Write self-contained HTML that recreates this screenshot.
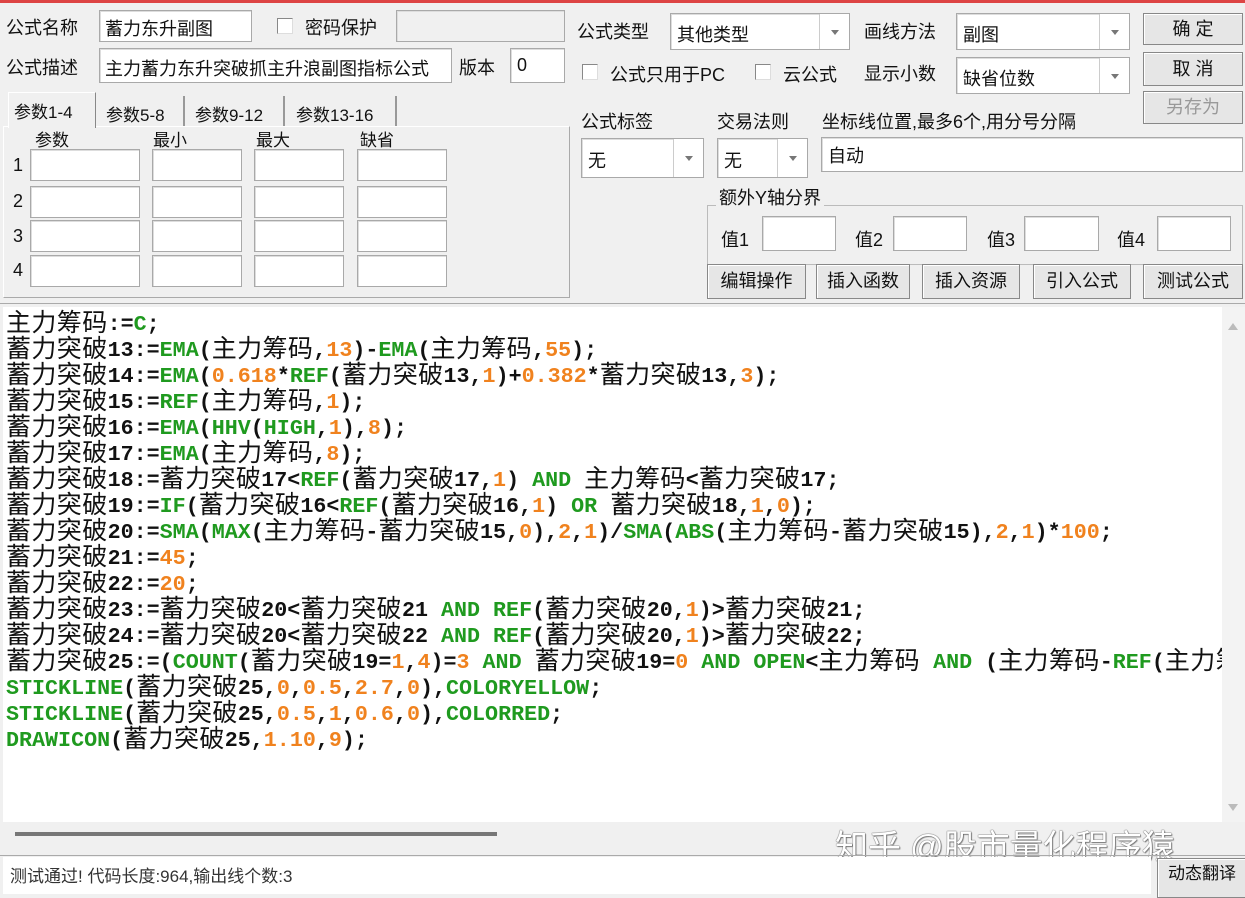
<!DOCTYPE html>
<html><head><meta charset="utf-8"><style>
*{box-sizing:border-box;margin:0;padding:0}
body{width:1245px;height:894px;background:#f0f0f0;position:relative;overflow:hidden;font-family:"Liberation Sans","Noto Sans CJK SC",sans-serif;font-size:18px;color:#111}
.a{position:absolute;white-space:nowrap}
.in{position:absolute;background:#fff;border:1px solid #a9a9a9;box-shadow:inset 1px 1px 0 #ddd}
.cb{position:absolute;width:16px;height:16px;background:#fff;border:1px solid #888;border-right-color:#ddd;border-bottom-color:#ddd}
.dd{position:absolute;right:0;top:0;bottom:0;width:30px;border-left:1px solid #ccc;background:#fff}
.dd:after{content:"";position:absolute;left:11px;top:50%;margin-top:-2px;border:4px solid transparent;border-top:5px solid #777}
.bt{position:absolute;background:#e6e6e6;border:1px solid #888;box-shadow:inset 1px 1px 0 #fff;text-align:center;font-size:18px}
.code{position:absolute;left:3px;top:307px;width:1219px;height:515px;background:#fff;padding:5px 0 0 3px;overflow:hidden;font-family:"Liberation Mono",monospace;font-weight:bold;font-size:21.7px;color:#111;white-space:nowrap}
.code div{height:26px;line-height:26px}
.code i{font-style:normal;font-weight:normal;font-family:"Noto Sans CJK SC",sans-serif;font-size:25px;line-height:0;letter-spacing:.4px;position:relative;top:1px}
g{color:#1f9a1f}o{color:#f0821e}
</style></head><body>
<div class="a" style="left:0;top:0;width:1245px;height:3px;background:#d44"></div>

<div class="a" style="left:6px;top:14px">公式名称</div>
<div class="in" style="left:99px;top:10px;width:153px;height:32px"><span class="a" style="left:5px;top:4px">蓄力东升副图</span></div>
<div class="cb" style="left:277px;top:18px"></div>
<div class="a" style="left:305px;top:14px">密码保护</div>
<div class="in" style="left:396px;top:10px;width:169px;height:32px;background:#f0f0f0"></div>
<div class="a" style="left:6px;top:54px">公式描述</div>
<div class="in" style="left:99px;top:48px;width:353px;height:35px;overflow:hidden"><span class="a" style="left:5px;top:6px">主力蓄力东升突破抓主升浪副图指标公式</span></div>
<div class="a" style="left:459px;top:54px">版本</div>
<div class="in" style="left:510px;top:48px;width:55px;height:35px"><span class="a" style="left:6px;top:6px">0</span></div>

<div class="a" style="left:3px;top:126px;width:567px;height:172px;border:1px solid #aaa;border-top-color:#fff;border-left-color:#fff"></div>
<div class="a" style="left:8px;top:92px;width:88px;height:36px;background:#f0f0f0;border:1px solid #fff;border-right-color:#888;border-bottom:none"></div>
<div class="a" style="left:14px;top:98px;font-size:17px">参数1-4</div>
<div class="a" style="left:98px;top:96px;width:87px;height:30px;border-right:2px solid #999"></div><div class="a" style="left:106px;top:101px;font-size:17px">参数5-8</div>
<div class="a" style="left:186px;top:96px;width:99px;height:30px;border-right:2px solid #999"></div><div class="a" style="left:195px;top:101px;font-size:17px">参数9-12</div>
<div class="a" style="left:287px;top:96px;width:110px;height:30px;border-right:2px solid #999"></div><div class="a" style="left:296px;top:101px;font-size:17px">参数13-16</div>
<div class="a" style="left:35px;top:126px;font-size:17px">参数</div>
<div class="a" style="left:153px;top:126px;font-size:17px">最小</div>
<div class="a" style="left:256px;top:126px;font-size:17px">最大</div>
<div class="a" style="left:360px;top:126px;font-size:17px">缺省</div>
<div class="a" style="left:13px;top:155px">1</div><div class="a" style="left:13px;top:191px">2</div><div class="a" style="left:13px;top:226px">3</div><div class="a" style="left:13px;top:260px">4</div>
<div class="in" style="left:30px;top:149px;width:110px;height:32px"></div><div class="in" style="left:152px;top:149px;width:90px;height:32px"></div><div class="in" style="left:254px;top:149px;width:90px;height:32px"></div><div class="in" style="left:357px;top:149px;width:90px;height:32px"></div>
<div class="in" style="left:30px;top:186px;width:110px;height:32px"></div><div class="in" style="left:152px;top:186px;width:90px;height:32px"></div><div class="in" style="left:254px;top:186px;width:90px;height:32px"></div><div class="in" style="left:357px;top:186px;width:90px;height:32px"></div>
<div class="in" style="left:30px;top:220px;width:110px;height:32px"></div><div class="in" style="left:152px;top:220px;width:90px;height:32px"></div><div class="in" style="left:254px;top:220px;width:90px;height:32px"></div><div class="in" style="left:357px;top:220px;width:90px;height:32px"></div>
<div class="in" style="left:30px;top:255px;width:110px;height:32px"></div><div class="in" style="left:152px;top:255px;width:90px;height:32px"></div><div class="in" style="left:254px;top:255px;width:90px;height:32px"></div><div class="in" style="left:357px;top:255px;width:90px;height:32px"></div>

<div class="a" style="left:577px;top:18px">公式类型</div>
<div class="in" style="left:670px;top:13px;width:180px;height:37px"><span class="a" style="left:6px;top:7px">其他类型</span><div class="dd"></div></div>
<div class="a" style="left:864px;top:18px">画线方法</div>
<div class="in" style="left:956px;top:13px;width:174px;height:37px"><span class="a" style="left:6px;top:7px">副图</span><div class="dd"></div></div>
<div class="bt" style="left:1143px;top:13px;width:100px;height:32px;line-height:30px">确 定</div>
<div class="bt" style="left:1143px;top:52px;width:100px;height:34px;line-height:32px">取 消</div>
<div class="bt" style="left:1143px;top:91px;width:100px;height:33px;line-height:31px;color:#999">另存为</div>
<div class="cb" style="left:582px;top:64px"></div><div class="a" style="left:610px;top:61px">公式只用于PC</div>
<div class="cb" style="left:755px;top:64px"></div><div class="a" style="left:783px;top:61px">云公式</div>
<div class="a" style="left:864px;top:60px">显示小数</div>
<div class="in" style="left:956px;top:57px;width:174px;height:37px"><span class="a" style="left:6px;top:7px">缺省位数</span><div class="dd"></div></div>
<div class="a" style="left:581px;top:108px">公式标签</div>
<div class="a" style="left:717px;top:108px">交易法则</div>
<div class="a" style="left:822px;top:108px">坐标线位置,最多6个,用分号分隔</div>
<div class="in" style="left:581px;top:138px;width:123px;height:40px"><span class="a" style="left:6px;top:8px">无</span><div class="dd"></div></div>
<div class="in" style="left:717px;top:138px;width:91px;height:40px"><span class="a" style="left:6px;top:8px">无</span><div class="dd"></div></div>
<div class="in" style="left:821px;top:137px;width:422px;height:35px"><span class="a" style="left:6px;top:4px">自动</span></div>
<div class="a" style="left:707px;top:205px;width:536px;height:60px;border:1px solid #bbb"></div>
<div class="a" style="left:716px;top:184px;background:#f0f0f0;padding:0 3px">额外Y轴分界</div>
<div class="a" style="left:721px;top:226px">值1</div><div class="in" style="left:762px;top:216px;width:74px;height:35px"></div>
<div class="a" style="left:855px;top:226px">值2</div><div class="in" style="left:893px;top:216px;width:74px;height:35px"></div>
<div class="a" style="left:987px;top:226px">值3</div><div class="in" style="left:1024px;top:216px;width:75px;height:35px"></div>
<div class="a" style="left:1117px;top:226px">值4</div><div class="in" style="left:1157px;top:216px;width:74px;height:35px"></div>
<div class="bt" style="left:707px;top:264px;width:99px;height:35px;line-height:33px">编辑操作</div>
<div class="bt" style="left:816px;top:264px;width:94px;height:35px;line-height:33px">插入函数</div>
<div class="bt" style="left:922px;top:264px;width:98px;height:35px;line-height:33px">插入资源</div>
<div class="bt" style="left:1033px;top:264px;width:98px;height:35px;line-height:33px">引入公式</div>
<div class="bt" style="left:1143px;top:264px;width:100px;height:35px;line-height:33px">测试公式</div>
<div class="a" style="left:0;top:303px;width:1245px;height:1px;background:#aaa"></div>

<div class="code">
<div><i>主力筹码</i>:=<g>C</g>;</div>
<div><i>蓄力突破</i>13:=<g>EMA</g>(<i>主力筹码</i>,<o>13</o>)-<g>EMA</g>(<i>主力筹码</i>,<o>55</o>);</div>
<div><i>蓄力突破</i>14:=<g>EMA</g>(<o>0.618</o>*<g>REF</g>(<i>蓄力突破</i>13,<o>1</o>)+<o>0.382</o>*<i>蓄力突破</i>13,<o>3</o>);</div>
<div><i>蓄力突破</i>15:=<g>REF</g>(<i>主力筹码</i>,<o>1</o>);</div>
<div><i>蓄力突破</i>16:=<g>EMA</g>(<g>HHV</g>(<g>HIGH</g>,<o>1</o>),<o>8</o>);</div>
<div><i>蓄力突破</i>17:=<g>EMA</g>(<i>主力筹码</i>,<o>8</o>);</div>
<div><i>蓄力突破</i>18:=<i>蓄力突破</i>17&lt;<g>REF</g>(<i>蓄力突破</i>17,<o>1</o>) <g>AND</g> <i>主力筹码</i>&lt;<i>蓄力突破</i>17;</div>
<div><i>蓄力突破</i>19:=<g>IF</g>(<i>蓄力突破</i>16&lt;<g>REF</g>(<i>蓄力突破</i>16,<o>1</o>) <g>OR</g> <i>蓄力突破</i>18,<o>1</o>,<o>0</o>);</div>
<div><i>蓄力突破</i>20:=<g>SMA</g>(<g>MAX</g>(<i>主力筹码</i>-<i>蓄力突破</i>15,<o>0</o>),<o>2</o>,<o>1</o>)/<g>SMA</g>(<g>ABS</g>(<i>主力筹码</i>-<i>蓄力突破</i>15),<o>2</o>,<o>1</o>)*<o>100</o>;</div>
<div><i>蓄力突破</i>21:=<o>45</o>;</div>
<div><i>蓄力突破</i>22:=<o>20</o>;</div>
<div><i>蓄力突破</i>23:=<i>蓄力突破</i>20&lt;<i>蓄力突破</i>21 <g>AND</g> <g>REF</g>(<i>蓄力突破</i>20,<o>1</o>)&gt;<i>蓄力突破</i>21;</div>
<div><i>蓄力突破</i>24:=<i>蓄力突破</i>20&lt;<i>蓄力突破</i>22 <g>AND</g> <g>REF</g>(<i>蓄力突破</i>20,<o>1</o>)&gt;<i>蓄力突破</i>22;</div>
<div><i>蓄力突破</i>25:=(<g>COUNT</g>(<i>蓄力突破</i>19=<o>1</o>,<o>4</o>)=<o>3</o> <g>AND</g> <i>蓄力突破</i>19=<o>0</o> <g>AND</g> <g>OPEN</g>&lt;<i>主力筹码</i> <g>AND</g> (<i>主力筹码</i>-<g>REF</g>(<i>主力筹码</i>,<o>1</o>))</div>
<div><g>STICKLINE</g>(<i>蓄力突破</i>25,<o>0</o>,<o>0.5</o>,<o>2.7</o>,<o>0</o>),<g>COLORYELLOW</g>;</div>
<div><g>STICKLINE</g>(<i>蓄力突破</i>25,<o>0.5</o>,<o>1</o>,<o>0.6</o>,<o>0</o>),<g>COLORRED</g>;</div>
<div><g>DRAWICON</g>(<i>蓄力突破</i>25,<o>1.10</o>,<o>9</o>);</div>
</div>
<div class="a" style="left:1222px;top:307px;width:23px;height:515px;background:#f3f3f3"></div>
<div class="a" style="left:1228px;top:318px;border:5px solid transparent;border-bottom:7px solid #bbb"></div>
<div class="a" style="left:1228px;top:804px;border:5px solid transparent;border-top:7px solid #bbb"></div>
<div class="a" style="left:15px;top:832px;width:482px;height:4px;background:#777"></div>
<div class="a" style="left:835px;top:820px;font-size:33px;color:#fff;text-shadow:0 0 1px #555,0 0 1px #555,1px 1px 1px #888">知乎 @股市量化程序猿</div>
<div class="a" style="left:0;top:855px;width:1245px;height:1px;background:#aaa"></div>
<div class="a" style="left:3px;top:857px;width:1148px;height:37px;background:#fff"></div>
<div class="a" style="left:10px;top:862px;font-size:17px;color:#333">测试通过! 代码长度:964,输出线个数:3</div>
<div class="bt" style="left:1157px;top:858px;width:90px;height:40px;line-height:30px;font-size:17px">动态翻译</div>
</body></html>
